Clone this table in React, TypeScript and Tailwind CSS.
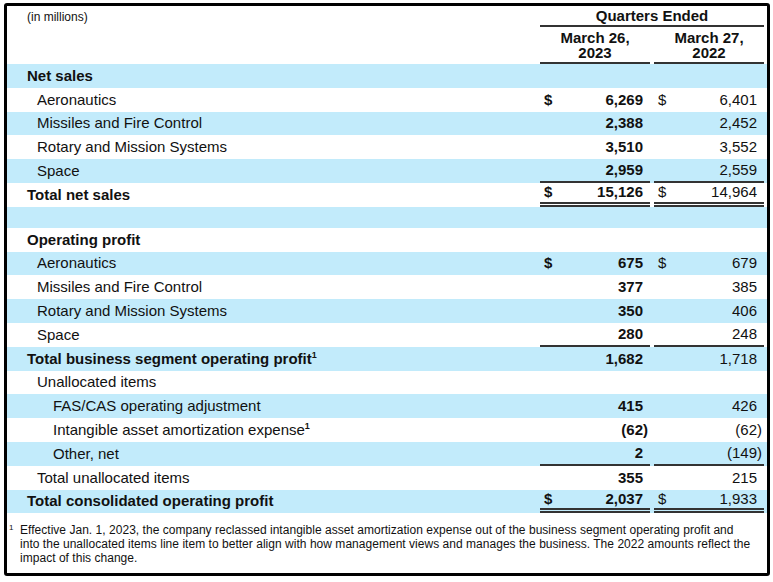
import React from "react";

type Row = {
  label?: string;
  level?: 0 | 1 | 2;
  bold?: boolean;
  blue?: boolean;
  a?: string;
  b?: string;
  dollar?: boolean;
  line?: "single" | "double";
  sup?: boolean;
  empty?: boolean;
};

const rows: Row[] = [
  { label: "Net sales", level: 0, bold: true, blue: true },
  { label: "Aeronautics", level: 1, a: "6,269", b: "6,401", dollar: true },
  { label: "Missiles and Fire Control", level: 1, blue: true, a: "2,388", b: "2,452" },
  { label: "Rotary and Mission Systems", level: 1, a: "3,510", b: "3,552" },
  { label: "Space", level: 1, blue: true, a: "2,959", b: "2,559", line: "single" },
  { label: "Total net sales", level: 0, bold: true, a: "15,126", b: "14,964", dollar: true, line: "double" },
  { empty: true, blue: true },
  { label: "Operating profit", level: 0, bold: true },
  { label: "Aeronautics", level: 1, blue: true, a: "675", b: "679", dollar: true },
  { label: "Missiles and Fire Control", level: 1, a: "377", b: "385" },
  { label: "Rotary and Mission Systems", level: 1, blue: true, a: "350", b: "406" },
  { label: "Space", level: 1, a: "280", b: "248", line: "single" },
  { label: "Total business segment operating profit", level: 0, bold: true, blue: true, sup: true, a: "1,682", b: "1,718" },
  { label: "Unallocated items", level: 1 },
  { label: "FAS/CAS operating adjustment", level: 2, blue: true, a: "415", b: "426" },
  { label: "Intangible asset amortization expense", level: 2, sup: true, a: "(62)", b: "(62)" },
  { label: "Other, net", level: 2, blue: true, a: "2", b: "(149)", line: "single" },
  { label: "Total unallocated items", level: 1, a: "355", b: "215" },
  { label: "Total consolidated operating profit", level: 0, bold: true, blue: true, a: "2,037", b: "1,933", dollar: true, line: "double" },
];

const indent = ["pl-[20px]", "pl-[30px]", "pl-[46px]"];

function Amount({ value }: { value?: string }) {
  if (!value) return null;
  if (value.endsWith(")")) {
    return (
      <span>
        {value.slice(0, -1)}
        <span className="-mr-[5px]">)</span>
      </span>
    );
  }
  return <span>{value}</span>;
}

function ValueCell({ value, dollar, bold, line }: { value?: string; dollar?: boolean; bold?: boolean; line?: Row["line"] }) {
  const border =
    line === "single"
      ? "border-b-2 border-[#333]"
      : line === "double"
      ? "border-b-[5px] border-double border-[#333]"
      : "";
  return (
    <div className={`w-[110px] h-full flex items-center justify-between pl-[4px] pr-[7px] ${border} ${bold ? "font-bold" : ""}`}>
      <span>{dollar ? "$" : ""}</span>
      <Amount value={value} />
    </div>
  );
}

export default function App() {
  return (
    <div className="bg-white w-[773px] h-[582px] pt-[3px] pl-[4px] text-[#111]" style={{ fontFamily: '"Liberation Sans", Arial, sans-serif' }}>
      <div className="w-[766px] h-[573px] border-[3px] border-black rounded-[3px] flex flex-col">
        {/* header */}
        <div className="flex h-[58px]">
          <div className="w-[533px] pl-[20px] pt-[4px] text-[12px] leading-[14px]">(in millions)</div>
          <div className="w-[224px] flex flex-col">
            <div className="h-[21px] border-b-2 border-[#333] text-center font-bold text-[15px] leading-[19px]">
              Quarters Ended
            </div>
            <div className="flex gap-[4px] text-[15px] font-bold leading-[15px] text-center">
              <div className="w-[110px] pt-[3px] pb-[2px] border-b-2 border-[#333]">
                March 26,
                <br />
                2023
              </div>
              <div className="w-[110px] pt-[3px] pb-[2px] border-b-2 border-[#333]">
                March 27,
                <br />
                2022
              </div>
            </div>
          </div>
        </div>

        {/* rows */}
        {rows.map((r, i) =>
          r.empty ? (
            <div key={i} className={`h-[21px] ${r.blue ? "bg-[#c2ebfb]" : ""}`} />
          ) : (
            <div key={i} className={`flex h-[23.8px] text-[15px] leading-[18px] ${r.blue ? "bg-[#c2ebfb]" : ""}`}>
              <div className={`w-[533px] flex items-center ${indent[r.level ?? 0]} ${r.bold ? "font-bold" : ""}`}>
                <span>
                  {r.label}
                  {r.sup && <sup className="text-[9px] font-bold -top-[6px]">1</sup>}
                </span>
              </div>
              {r.a !== undefined ? (
                <div className="flex gap-[4px] h-full">
                  <ValueCell value={r.a} dollar={r.dollar} bold line={r.line} />
                  <ValueCell value={r.b} dollar={r.dollar} line={r.line} />
                </div>
              ) : null}
            </div>
          )
        )}

        {/* footnote */}
        <div className="flex pt-[10px] pl-[2px] text-[12px] leading-[14px] tracking-[0.03px] text-[#111]">
          <span className="w-[11px] text-[8px] leading-[10px] shrink-0">1</span>
          <p className="whitespace-nowrap">
            Effective Jan. 1, 2023, the company reclassed intangible asset amortization expense out of the business segment operating profit and
            <br />
            into the unallocated items line item to better align with how management views and manages the business. The 2022 amounts reflect the
            <br />
            impact of this change.
          </p>
        </div>
      </div>
    </div>
  );
}
